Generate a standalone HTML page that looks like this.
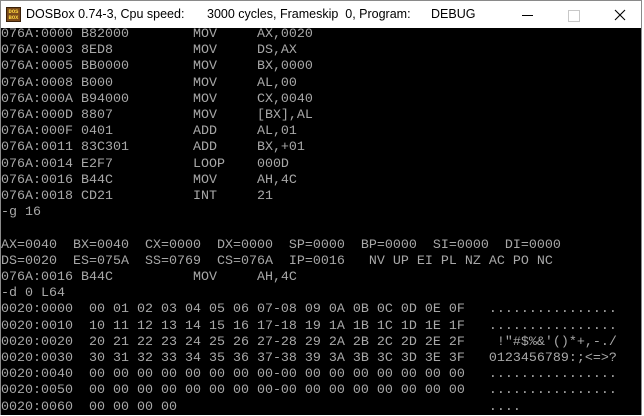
<!DOCTYPE html>
<html><head><meta charset="utf-8"><style>
html,body{margin:0;padding:0;width:644px;height:415px;overflow:hidden;background:#fff;}
#win{position:absolute;left:0;top:0;width:644px;height:415px;background:#fff;}
#border{position:absolute;left:0;top:0;width:642px;height:415px;border:1px solid #8a8a8a;border-bottom:none;box-sizing:border-box;}
#title{position:absolute;left:1px;top:1px;width:640px;height:27px;background:#fff;font-family:"Liberation Sans",sans-serif;font-size:12.5px;color:#000;}
#title span{position:absolute;top:6px;white-space:pre;}
#icon{position:absolute;left:5px;top:6px;width:15px;height:15px;background:#7a4a1a;border:1px solid #3a2008;box-sizing:border-box;font-family:"Liberation Mono",monospace;font-size:5.5px;line-height:6px;color:#ffd840;font-weight:bold;text-align:center;padding-top:1px;}
#con{position:absolute;left:1px;top:28px;width:640px;height:387px;background:#000;}
pre{position:absolute;left:1px;top:27px;margin:0;font-family:"Liberation Mono",monospace;font-size:13.33px;line-height:16.2px;color:#a8a8a8;white-space:pre;}
#min{position:absolute;left:521px;top:14px;width:11px;height:1px;background:#000;}
#max{position:absolute;left:567px;top:9px;width:10px;height:10px;border:1px solid #c8c8c8;}
</style></head><body>
<div id="win">
<div id="title">
<div id="icon">DOS<br>BOX</div>
<span style="left:25px">DOSBox 0.74-3, Cpu speed:</span>
<span style="left:206px">3000 cycles, Frameskip  0, Program:</span>
<span style="left:430px">DEBUG</span>
<div id="min"></div><div id="max"></div>
<svg style="position:absolute;left:613px;top:8px" width="12" height="12"><path d="M1 1L11 11M11 1L1 11" stroke="#000" stroke-width="1.1"/></svg>
</div>
<div id="con"></div>
<div id="border"></div>
<pre>076A:0000 B82000        MOV     AX,0020
076A:0003 8ED8          MOV     DS,AX
076A:0005 BB0000        MOV     BX,0000
076A:0008 B000          MOV     AL,00
076A:000A B94000        MOV     CX,0040
076A:000D 8807          MOV     [BX],AL
076A:000F 0401          ADD     AL,01
076A:0011 83C301        ADD     BX,+01
076A:0014 E2F7          LOOP    000D
076A:0016 B44C          MOV     AH,4C
076A:0018 CD21          INT     21
-g 16

AX=0040  BX=0040  CX=0000  DX=0000  SP=0000  BP=0000  SI=0000  DI=0000
DS=0020  ES=075A  SS=0769  CS=076A  IP=0016   NV UP EI PL NZ AC PO NC
076A:0016 B44C          MOV     AH,4C
-d 0 L64
0020:0000  00 01 02 03 04 05 06 07-08 09 0A 0B 0C 0D 0E 0F   ................
0020:0010  10 11 12 13 14 15 16 17-18 19 1A 1B 1C 1D 1E 1F   ................
0020:0020  20 21 22 23 24 25 26 27-28 29 2A 2B 2C 2D 2E 2F    !"#$%&amp;'()*+,-./
0020:0030  30 31 32 33 34 35 36 37-38 39 3A 3B 3C 3D 3E 3F   0123456789:;&lt;=&gt;?
0020:0040  00 00 00 00 00 00 00 00-00 00 00 00 00 00 00 00   ................
0020:0050  00 00 00 00 00 00 00 00-00 00 00 00 00 00 00 00   ................
0020:0060  00 00 00 00                                       ....</pre>
</div>
</body></html>
